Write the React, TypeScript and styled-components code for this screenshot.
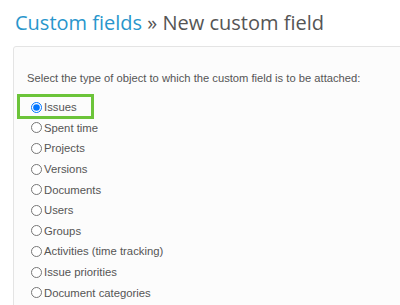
import React, { useState } from 'react';
import styled, { createGlobalStyle } from 'styled-components';

const GlobalStyle = createGlobalStyle`
  body {
    margin: 0;
    background: #ffffff;
    font-family: "Liberation Sans", Arial, sans-serif;
    color: #555;
  }
`;

const Page = styled.div`
  padding: 9px 0 0 13px;
  overflow: hidden;
`;

const Title = styled.h2`
  margin: 0 0 9px 2px;
  font-family: "Open Sans", sans-serif;
  font-weight: 400;
  font-size: 20px;
  line-height: 28px;
  color: #555;
  white-space: nowrap;
`;

const Crumb = styled.a`
  color: #2996cc;
  text-decoration: none;
`;

const Box = styled.div`
  width: 420px;
  background: #fcfcfc;
  border: 1px solid #e4e4e4;
  border-radius: 3px;
  padding: 23px 13px 8px;
`;

const Intro = styled.p`
  margin: 0 0 11px;
  font-size: 11.2px;
  line-height: 16px;
  white-space: nowrap;
`;

const Options = styled.div`
  display: flex;
  flex-direction: column;
  padding-left: 4px;
`;

const Row = styled.label<{ $highlight?: boolean }>`
  position: relative;
  display: flex;
  align-items: center;
  height: 20.6px;
  font-size: 11.3px;
  color: #555;

  ${(p) =>
    p.$highlight &&
    `
    &::before {
      content: '';
      position: absolute;
      left: -14px;
      top: -3px;
      width: 71px;
      height: 19px;
      border: 3px solid #6cc43a;
      pointer-events: none;
    }
  `}
`;

const Radio = styled.input`
  width: 11px;
  height: 11px;
  margin: 0 2px 0 0;
`;

const types = [
  'Issues',
  'Spent time',
  'Projects',
  'Versions',
  'Documents',
  'Users',
  'Groups',
  'Activities (time tracking)',
  'Issue priorities',
  'Document categories',
];

const App = () => {
  const [selected, setSelected] = useState('Issues');

  return (
    <Page>
      <GlobalStyle />
      <Title>
        <Crumb href="#">Custom fields</Crumb> » New custom field
      </Title>
      <Box>
        <Intro>Select the type of object to which the custom field is to be attached:</Intro>
        <Options>
          {types.map((t) => (
            <Row key={t} $highlight={t === 'Issues'}>
              <Radio
                type="radio"
                name="type"
                checked={selected === t}
                onChange={() => setSelected(t)}
              />
              {t}
            </Row>
          ))}
        </Options>
      </Box>
    </Page>
  );
};

export default App;
